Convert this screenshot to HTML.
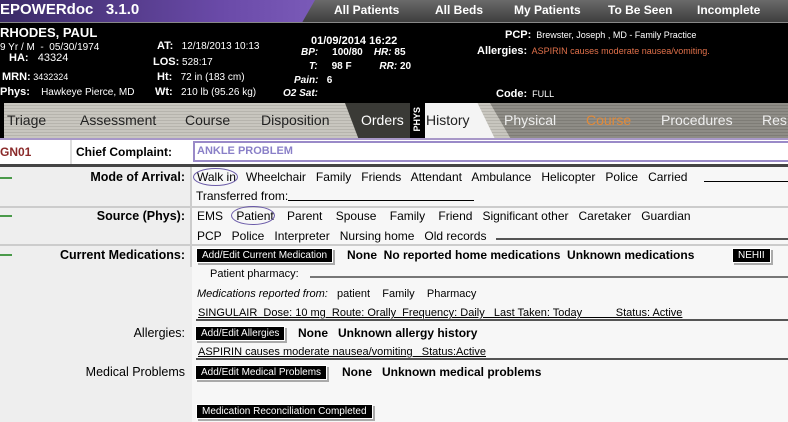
<!DOCTYPE html>
<html><head><meta charset="utf-8"><style>
*{margin:0;padding:0;box-sizing:border-box}
body{width:788px;height:422px;overflow:hidden;background:#eeeeee;font-family:"Liberation Sans",sans-serif;position:relative;font-size:11px;color:#000}
.a{position:absolute;white-space:nowrap}
.top{left:0;top:0;width:788px;height:22px;background:linear-gradient(#6a6a6a,#3e3e3e)}
.purp{left:0;top:0;width:315px;height:22px;background:linear-gradient(90deg,#3a2a66,#6a4aa8 70%,#7a5ab8);clip-path:polygon(0 0,100% 0,96% 100%,0 100%)}
.nav{color:#fff;font-weight:bold;font-size:12px;top:3px}
.blk{left:0;top:22px;width:788px;height:81px;background:#000;color:#fff;border-top:1px solid #888}
.w{color:#fff}
.tabs{left:0;top:103px;width:788px;height:36px;background:repeating-linear-gradient(#c8c6bf 0 2px,#b6b4ad 2px 3px)}
.tab{top:112px;font-size:14px;color:#222}
.row{left:0;width:788px}
.btn{background:#000;color:#fff;font-size:10px;padding:1px 5px;box-shadow:0 0 0 1px #fff,2px 2px 0 1px #aaa;font-family:"Liberation Sans Narrow","Liberation Sans",sans-serif}
.lab{font-weight:bold;font-size:12.5px;text-align:right}
.dash{left:0;width:12px;height:2px;background:#4a9a4a}
.t12{font-size:12px}
</style></head><body>
<div class="a top"></div>
<div class="a purp"></div>
<div class="a" style="left:0;top:1px;color:#fff;font-weight:bold;font-size:15px">EPOWERdoc&nbsp;&nbsp; 3.1.0</div>
<div class="a nav" style="left:334px">All Patients</div>
<div class="a nav" style="left:435px">All Beds</div>
<div class="a nav" style="left:514px">My Patients</div>
<div class="a nav" style="left:608px">To Be Seen</div>
<div class="a nav" style="left:697px">Incomplete</div>

<div class="a blk"></div>
<div class="a w" style="left:0;top:25px;font-weight:bold;font-size:13px">RHODES, PAUL</div>
<div class="a w" style="left:0;top:42px;font-size:10px">9 Yr / M&nbsp; -&nbsp; 05/30/1974</div>
<div class="a w" style="left:9px;top:52px;font-size:11px"><b>HA:</b>&nbsp;&nbsp; 43324</div>
<div class="a w" style="left:2px;top:71px;font-size:9px"><b style="font-size:11px">MRN:</b> 3432324</div>
<div class="a w" style="left:0;top:86px;font-size:10px"><b style="font-size:11px">Phys:</b>&nbsp;&nbsp;&nbsp; Hawkeye Pierce, MD</div>
<div class="a w" style="left:157px;top:40px;font-size:10px"><b style="font-size:11px">AT:</b>&nbsp;&nbsp; 12/18/2013 10:13</div>
<div class="a w" style="left:153px;top:56px;font-size:10px"><b style="font-size:11px">LOS:</b> 528:17</div>
<div class="a w" style="left:157px;top:71px;font-size:10px"><b style="font-size:11px">Ht:</b>&nbsp;&nbsp; 72 in (183 cm)</div>
<div class="a w" style="left:155px;top:86px;font-size:10px"><b style="font-size:11px">Wt:</b>&nbsp;&nbsp; 210 lb (95.26 kg)</div>
<div class="a w" style="left:311px;top:35px;font-weight:bold;font-size:11px">01/09/2014 16:22</div>
<div class="a w" style="left:301px;top:47px;font-size:10px;font-weight:bold"><i>BP:</i>&nbsp;&nbsp;&nbsp;&nbsp; 100/80&nbsp;&nbsp;&nbsp; <i>HR:</i> 85</div>
<div class="a w" style="left:309px;top:61px;font-size:10px;font-weight:bold"><i>T:</i>&nbsp;&nbsp;&nbsp;&nbsp; 98 F&nbsp;&nbsp;&nbsp;&nbsp;&nbsp;&nbsp;&nbsp;&nbsp;&nbsp; <i>RR:</i> 20</div>
<div class="a w" style="left:294px;top:75px;font-size:10px;font-weight:bold"><i>Pain:</i>&nbsp;&nbsp; 6</div>
<div class="a w" style="left:283px;top:88px;font-size:10px;font-weight:bold"><i>O2 Sat:</i></div>
<div class="a w" style="left:505px;top:29px;font-size:9px"><b style="font-size:11px">PCP:</b>&nbsp; Brewster, Joseph , MD - Family Practice</div>
<div class="a w" style="left:477px;top:45px;font-size:9px"><b style="font-size:11px">Allergies:</b>&nbsp; <span style="color:#e0704a">ASPIRIN causes moderate nausea/vomiting.</span></div>
<div class="a w" style="left:496px;top:88px;font-size:9px"><b style="font-size:11px">Code:</b>&nbsp; FULL</div>

<div class="a tabs"></div>
<div class="a" style="left:345px;top:103px;width:68px;height:36px;background:#3a3a36;clip-path:polygon(0 0,100% 0,100% 100%,20% 100%)"></div>
<div class="a" style="left:410px;top:103px;width:15px;height:35px;background:#000"></div>
<div class="a" style="left:412px;top:107px;color:#fff;font-size:9px;writing-mode:vertical-rl;transform:rotate(180deg);font-weight:bold">PHYS</div>
<div class="a" style="left:425px;top:103px;width:70px;height:36px;background:#f4f4f4;clip-path:polygon(0 0,75% 0,100% 100%,0 100%)"></div>
<div class="a" style="left:490px;top:103px;width:298px;height:36px;background:repeating-linear-gradient(#8e8c86 0 2px,#7e7c76 2px 3px);clip-path:polygon(0 0,100% 0,100% 100%,7% 100%)"></div>
<div class="a" style="left:0;top:103px;width:4px;height:36px;background:#000"></div>
<div class="a tab" style="left:7px">Triage</div>
<div class="a tab" style="left:80px">Assessment</div>
<div class="a tab" style="left:185px">Course</div>
<div class="a tab" style="left:261px">Disposition</div>
<div class="a tab" style="left:361px;color:#fff">Orders</div>
<div class="a tab" style="left:426px">History</div>
<div class="a tab" style="left:504px;color:#eee">Physical</div>
<div class="a tab" style="left:586px;color:#e08a3a">Course</div>
<div class="a tab" style="left:661px;color:#eee">Procedures</div>
<div class="a tab" style="left:762px;color:#eee">Res</div>
<div class="a" style="left:0;top:138px;width:788px;height:2px;background:#a898c8"></div>

<div class="a row" style="top:140px;height:24px;background:#fff"></div>
<div class="a" style="left:70px;top:140px;width:2px;height:24px;background:#ddd"></div>
<div class="a" style="left:0;top:145px;font-weight:bold;font-size:12px;color:#8a2a2a">GN01</div>
<div class="a" style="left:76px;top:145px;font-weight:bold;font-size:12px">Chief Complaint:</div>
<div class="a" style="left:193px;top:141px;width:595px;height:21px;border:2px solid #9a8ac8;border-right:none"></div>
<div class="a" style="left:197px;top:145px;font-weight:bold;font-size:11px;color:#8a80c8">ANKLE PROBLEM</div>
<div class="a" style="left:0;top:164px;width:788px;height:3px;background:#444"></div>

<div class="a" style="left:192px;top:167px;width:596px;height:255px;background:#f7f7f7"></div>
<div class="a" style="left:0;top:206px;width:788px;height:2px;background:#ccc"></div>
<div class="a" style="left:0;top:244px;width:788px;height:2px;background:#ccc"></div>
<div class="a" style="left:190px;top:167px;width:2px;height:100px;background:#ccc"></div>
<div class="a dash" style="top:177px"></div>
<div class="a dash" style="top:215px"></div>
<div class="a dash" style="top:254px"></div>

<div class="a lab" style="right:603px;top:170px">Mode of Arrival:</div>
<div class="a t12" style="left:197px;top:170px">Walk in&nbsp;&nbsp; Wheelchair&nbsp;&nbsp; Family&nbsp;&nbsp; Friends&nbsp;&nbsp; Attendant&nbsp;&nbsp; Ambulance&nbsp;&nbsp; Helicopter&nbsp;&nbsp; Police&nbsp;&nbsp; Carried</div>
<div class="a" style="left:193px;top:168px;width:45px;height:18px;border:1px solid #6a5aa8;border-radius:50%"></div>
<div class="a" style="left:704px;top:181px;width:84px;height:1px;background:#000"></div>
<div class="a t12" style="left:196px;top:189px">Transferred from:</div>
<div class="a" style="left:288px;top:200px;width:186px;height:1px;background:#000"></div>

<div class="a lab" style="right:603px;top:209px">Source (Phys):</div>
<div class="a t12" style="left:197px;top:209px">EMS&nbsp;&nbsp;&nbsp; Patient&nbsp;&nbsp;&nbsp; Parent&nbsp;&nbsp;&nbsp; Spouse&nbsp;&nbsp;&nbsp; Family&nbsp;&nbsp;&nbsp; Friend&nbsp;&nbsp; Significant other&nbsp;&nbsp; Caretaker&nbsp;&nbsp; Guardian</div>
<div class="a" style="left:231px;top:206px;width:44px;height:19px;border:1px solid #6a5aa8;border-radius:50%"></div>
<div class="a t12" style="left:197px;top:229px">PCP&nbsp;&nbsp; Police&nbsp;&nbsp; Interpreter&nbsp;&nbsp; Nursing home&nbsp;&nbsp; Old records</div>
<div class="a" style="left:496px;top:238px;width:292px;height:2px;background:#555"></div>

<div class="a lab" style="right:603px;top:248px">Current Medications:</div>
<div class="a btn" style="left:197px;top:249px">Add/Edit Current Medication</div>
<div class="a" style="left:347px;top:248px;font-weight:bold;font-size:12px">None&nbsp; No reported home medications&nbsp; Unknown medications</div>
<div class="a btn" style="left:733px;top:249px">NEHII</div>
<div class="a" style="left:210px;top:268px">Patient pharmacy:</div>
<div class="a" style="left:310px;top:276px;width:478px;height:2px;background:#777"></div>
<div class="a" style="left:197px;top:288px"><i>Medications reported from:</i>&nbsp;&nbsp; patient&nbsp;&nbsp;&nbsp; Family&nbsp;&nbsp;&nbsp; Pharmacy</div>
<div class="a" style="left:198px;top:307px;text-decoration:underline">SINGULAIR&nbsp; Dose: 10 mg&nbsp; Route: Orally&nbsp; Frequency: Daily&nbsp;&nbsp; Last Taken: Today&nbsp;&nbsp;&nbsp;&nbsp;&nbsp;&nbsp;&nbsp;&nbsp;&nbsp;&nbsp; Status: Active</div>
<div class="a" style="left:196px;top:319px;width:592px;height:2px;background:#555"></div>

<div class="a" style="right:603px;top:326px;font-size:12.5px">Allergies:</div>
<div class="a btn" style="left:196px;top:327px">Add/Edit Allergies</div>
<div class="a" style="left:298px;top:326px;font-weight:bold;font-size:12px">None&nbsp;&nbsp; Unknown allergy history</div>
<div class="a" style="left:198px;top:346px;text-decoration:underline">ASPIRIN causes moderate nausea/vomiting&nbsp;&nbsp; Status:Active</div>
<div class="a" style="left:196px;top:358px;width:592px;height:2px;background:#555"></div>

<div class="a" style="right:603px;top:365px;font-size:12.5px">Medical Problems</div>
<div class="a btn" style="left:196px;top:366px">Add/Edit Medical Problems</div>
<div class="a" style="left:342px;top:365px;font-weight:bold;font-size:12px">None&nbsp;&nbsp; Unknown medical problems</div>
<div class="a btn" style="left:197px;top:405px">Medication Reconciliation Completed</div>
</body></html>
